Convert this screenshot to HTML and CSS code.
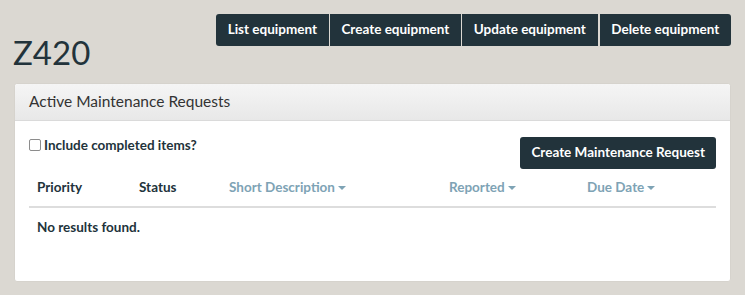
FILE: index.html
```html
<!DOCTYPE html>
<html>
<head>
<meta charset="utf-8">
<link rel="stylesheet" href="styles.css">
</head>
<body>
<div class="page">
  <div class="top">
    <h1 class="title">Z420</h1>
    <div class="btn-group">
      <a class="btn">List equipment</a>
      <a class="btn">Create equipment</a>
      <a class="btn">Update equipment</a>
      <a class="btn">Delete equipment</a>
    </div>
  </div>
  <div class="panel">
    <div class="panel-heading">Active Maintenance Requests</div>
    <div class="panel-body">
      <div class="toolbar">
        <label class="check"><span class="box"></span>Include completed items?</label>
        <a class="btn btn-solo">Create Maintenance Request</a>
      </div>
      <table class="grid">
        <thead>
          <tr>
            <th class="c1">Priority</th>
            <th class="c2">Status</th>
            <th class="c3 sort">Short Description<span class="caret"></span></th>
            <th class="c4 sort">Reported<span class="caret"></span></th>
            <th class="c5 sort">Due Date<span class="caret"></span></th>
          </tr>
        </thead>
        <tbody>
          <tr><td colspan="5">No results found.</td></tr>
        </tbody>
      </table>
    </div>
  </div>
</div>
</body>
</html>
```
FILE: styles.css
```css
* { box-sizing: border-box; }
html, body { margin: 0; padding: 0; }
body {
  background: #dbd8d2;
  font-family: "Lato", "Liberation Sans", sans-serif;
  color: #22333b;
  width: 745px;
  height: 295px;
  overflow: hidden;
}
.page { padding: 14px 14px 0 14px; }
.top {
  display: flex;
  justify-content: space-between;
  align-items: flex-start;
  height: 69px;
}
.title {
  margin: 20px 0 0 -1px;
  font-size: 33px;
  font-weight: 400;
  line-height: 36px;
  color: #22333b;
}
.btn-group { display: flex; gap: 1px; }
.btn {
  display: inline-block;
  background: #22333b;
  color: #fff;
  font-weight: 700;
  font-size: 13.5px;
  height: 32px;
  line-height: 31px;
  padding: 0 11.75px;
  white-space: nowrap;
}
.btn-group .btn:first-child { border-radius: 3px 0 0 3px; }
.btn-group .btn:last-child { border-radius: 0 3px 3px 0; margin-left: 1px; }
.panel {
  background: #fff;
  border-radius: 3px;
  height: 199px;
  border: 1px solid #d6d3cd;
}
.panel-heading {
  height: 37px;
  background: linear-gradient(#f5f5f5, #e8e8e8);
  border-bottom: 1px solid #dadada;
  border-radius: 3px 3px 0 0;
  padding: 0 14px;
  font-size: 15.5px;
  line-height: 35px;
  color: #333;
}
.panel-body { padding: 15px 14px 0 14px; }
.toolbar {
  display: flex;
  justify-content: space-between;
  align-items: flex-start;
  height: 33px;
}
.check {
  display: flex;
  align-items: center;
  font-weight: 700;
  font-size: 13.5px;
  color: #22333b;
  line-height: 18px;
}
.box {
  display: inline-block;
  width: 12px;
  height: 12px;
  border: 1px solid #8c8c8c;
  border-radius: 2px;
  background: #fff;
  margin-right: 3px;
}
.btn-solo { border-radius: 3px; padding: 0 11px; margin-top: 1px; }
.grid {
  width: 687px;
  border-collapse: collapse;
  table-layout: fixed;
  font-size: 13.5px;
}
.grid th {
  text-align: left;
  font-weight: 700;
  padding: 8px 8px 10px;
  height: 38px;
  border-bottom: 2px solid #dddddd;
  color: #22333b;
}
.grid th.sort { color: #7ea3b5; }
.c1 { width: 102px; }
.c2 { width: 90px; }
.c3 { width: 220px; }
.c4 { width: 138px; }
.c5 { width: 137px; }
.caret {
  display: inline-block;
  width: 0; height: 0;
  margin-left: 3px;
  vertical-align: middle;
  border-top: 4px solid #7ea3b5;
  border-left: 4px solid transparent;
  border-right: 4px solid transparent;
}
.grid td {
  padding: 9px 8px 8px;
  font-weight: 700;
  height: 38px;
  color: #22333b;
}
```
